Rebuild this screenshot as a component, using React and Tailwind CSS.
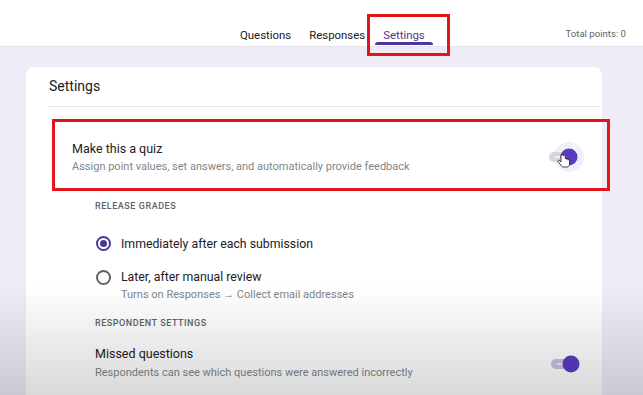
const tabs = ["Questions", "Responses", "Settings"];

const Radio = ({ checked }) => (
  <span
    className={`flex h-[15px] w-[15px] shrink-0 items-center justify-center rounded-full border-2 ${
      checked ? "border-[#4a3796]" : "border-[#5f6368]"
    }`}
  >
    {checked && <span className="h-[7px] w-[7px] rounded-full bg-[#4a3796]" />}
  </span>
);

const Toggle = ({ halo, cursor }) => (
  <svg width="44" height="34" viewBox="0 0 44 34" className="shrink-0">
    {halo && <circle cx="26" cy="17" r="15" fill="#f1eff7" />}
    <rect x="6" y="12" width="26" height="10" rx="5" fill={halo ? "#d6d4dc" : "#c9bfe6"} />
    <rect x="12" y="16" width="8" height="2" rx="1" fill="#ffffff" opacity="0.7" />
    <circle cx="26" cy="17" r="8.5" fill="#5b3bc2" />
    {cursor && (
      <path
        d="M18 14.5 v7.5 l-1.6 -1.6 c-0.8 -0.8 -2 0.2 -1.3 1.1 l3.2 4.2 c0.6 0.8 1.3 1.3 2.4 1.3 h3.2 c1.6 0 2.6 -1.2 2.6 -2.8 v-4 c0 -0.9 -1.4 -0.9 -1.4 0 v-0.8 c0 -0.9 -1.4 -0.9 -1.4 0 v-0.6 c0 -0.9 -1.4 -0.9 -1.4 0 v-3.3 c0 -1 -1.3 -1 -1.3 0 z"
        fill="#ffffff"
        stroke="#2b2b2b"
        strokeWidth="0.9"
        strokeLinejoin="round"
      />
    )}
  </svg>
);

const App = () => {
  return (
    <div
      className="relative h-[395px] w-[643px] overflow-hidden bg-[#efecf7]"
      style={{ fontFamily: "Roboto, 'Liberation Sans', sans-serif" }}
    >
      {/* top bar */}
      <div className="relative flex h-[47px] items-end border-b border-[#e4e2ea] bg-white">
        <div className="flex gap-[2px] pl-[232px]">
          {tabs.map((t) => (
            <div key={t} className="relative flex h-[21px] flex-col items-center px-2 pt-[2px]">
              <span
                className={`text-[11.4px] leading-4 ${
                  t === "Settings" ? "text-[#4a3796]" : "text-[#202124]"
                }`}
              >
                {t}
              </span>
              {t === "Settings" && (
                <>
                  <span className="absolute bottom-[1px] left-0 right-0 h-[3px] rounded-t-sm bg-[#4a3796]" />
                  <span className="pointer-events-none absolute left-[-8px] top-[-11px] h-[42px] w-[83px] border-[3px] border-[#e3141c]" />
                </>
              )}
            </div>
          ))}
        </div>
        <span className="absolute right-[17px] top-[27px] text-[9.6px] text-[#5f6368]">Total points: 0</span>
      </div>

      {/* card */}
      <div className="ml-[26px] mt-[20px] w-[576px] rounded-t-lg bg-white pb-10">
        <div className="pl-[23px] pt-[9px]">
          <h2 className="text-[14px] leading-5 text-[#202124]">Settings</h2>
          <div className="mr-[2px] mt-[10px] h-px bg-[#e6e6e6]" />
        </div>

        {/* quiz row */}
        <div className="relative mt-[14px] flex items-center justify-between pl-[46px] pr-[15px]">
          <div className="pt-[20px] pb-[14px]">
            <p className="text-[12.5px] leading-4 text-[#202124]">Make this a quiz</p>
            <p className="mt-[2px] text-[11px] leading-4 text-[#80868b]">
              Assign point values, set answers, and automatically provide feedback
            </p>
          </div>
          <div className="mt-[4px]">
            <Toggle halo cursor />
          </div>
          <span className="pointer-events-none absolute bottom-[-2px] left-[26px] right-[-8px] top-[-2px] border-[3px] border-[#e3141c]" />
        </div>

        <div className="pl-[69px] pr-[13px]">
          <p className="mt-[11px] text-[9px] font-medium uppercase tracking-[0.06em] text-[#5f6368]">Release grades</p>

          <div className="mt-[21px] flex items-center gap-[10px] pl-[1px]">
            <Radio checked />
            <span className="text-[12.3px] text-[#202124]">Immediately after each submission</span>
          </div>

          <div className="mt-[15px] flex items-center gap-[10px] pl-[1px]">
            <Radio />
            <span className="text-[12.3px] text-[#202124]">Later, after manual review</span>
          </div>
          <p className="ml-[26px] mt-[1px] text-[11px] text-[#80868b]">
            Turns on Responses → Collect email addresses
          </p>

          <p className="mt-[13px] text-[9px] font-medium uppercase tracking-[0.06em] text-[#5f6368]">
            Respondent settings
          </p>

          <div className="mt-[16px] flex items-center justify-between">
            <div>
              <p className="text-[12.5px] leading-4 text-[#202124]">Missed questions</p>
              <p className="mt-[3px] text-[11px] leading-4 text-[#80868b]">
                Respondents can see which questions were answered incorrectly
              </p>
            </div>
            <div>
              <Toggle />
            </div>
          </div>
        </div>
      </div>

      {/* video fade at bottom */}
      <div className="pointer-events-none absolute inset-x-0 bottom-0 h-[110px] bg-gradient-to-b from-transparent to-black/15" />
    </div>
  );
};

export default App;
